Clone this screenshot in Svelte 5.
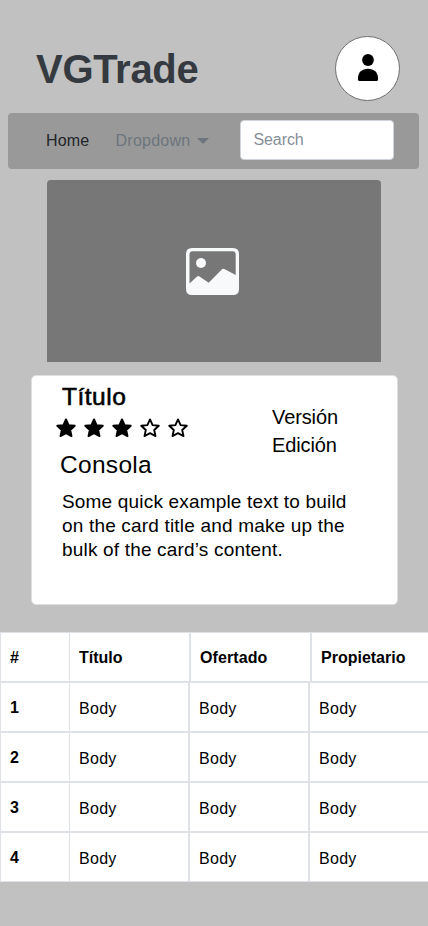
<script>
  const stars = [true, true, true, false, false];
  const headings = ['#', 'Título', 'Ofertado', 'Propietario'];
  const rows = [1, 2, 3, 4];
  const star = 'M10 1.4 12.6 7.1 18.8 7.8 14.2 12 15.5 18.1 10 15.1 4.5 18.1 5.8 12 1.2 7.8 7.4 7.1Z';
</script>

<div class="page">
  <header>
    <h1>VGTrade</h1>
    <div class="avatar">
      <svg width="20" height="27" viewBox="0 0 20 27"><circle cx="10" cy="6" r="5.9" /><path d="M0 25.5V24C0 18.5 4.2 14.8 10 14.8S20 18.5 20 24V25.5Q20 27 18.5 27H1.5Q0 27 0 25.5Z" /></svg>
    </div>
  </header>
  <nav>
    <span class="home">Home</span>
    <span class="drop">Dropdown</span>
    <svg class="caret" width="12" height="6" viewBox="0 0 12 6"><path d="M0 0H12L6 6Z" /></svg>
    <div class="search">Search</div>
  </nav>
  <div class="hero">
    <svg width="53" height="47" viewBox="0 0 53 47">
      <path fill-rule="evenodd" d="M6 0H47Q53 0 53 6V41Q53 47 47 47H6Q0 47 0 41V6Q0 0 6 0ZM3.5 35.5 11 28.5Q12.2 27.5 13.5 28.4L22.7 34.8 35.5 21.7Q37 20.3 38.8 21.2L49.7 27V6.5Q49.7 3.3 46.5 3.3H6.7Q3.5 3.3 3.5 6.5Z" />
      <circle cx="15" cy="15" r="5" />
    </svg>
  </div>
  <section class="card">
    <div class="top">
      <div class="left">
        <h2>Título</h2>
        <div class="stars">
          {#each stars as full}
            <svg class:full width="20" height="20" viewBox="0 0 20 20"><path d={star} /></svg>
          {/each}
        </div>
        <div class="console">Consola</div>
      </div>
      <div class="right"><div>Versión</div><div>Edición</div></div>
    </div>
    <p>Some quick example text to build<br />on the card title and make up the<br />bulk of the card’s content.</p>
  </section>
  <div class="table">
    <div class="row head">
      {#each headings as h}<div class="cell">{h}</div>{/each}
    </div>
    {#each rows as n}
      <div class="row">
        <div class="cell num">{n}</div>
        <div class="cell">Body</div>
        <div class="cell">Body</div>
        <div class="cell">Body</div>
      </div>
    {/each}
  </div>
</div>

<style>
  :global(body) { margin: 0; background: #c1c1c1; }
  .page { box-sizing: border-box; width: 428px; height: 926px; overflow: hidden; background: #c1c1c1; font-family: "Liberation Sans", Arial, sans-serif; font-size: 16px; color: #000; }
  .page * { box-sizing: border-box; }
  svg { display: block; }
  header { height: 113px; display: flex; justify-content: space-between; padding: 35px 28px 0 36px; }
  h1 { margin: 11px 0 0; font-size: 40px; line-height: 46px; color: #343a40; letter-spacing: -0.3px; }
  .avatar { width: 65px; height: 65px; margin-top: 0.5px; border: 1px solid #707070; border-radius: 50%; background: #fff; display: flex; align-items: center; justify-content: center; padding-bottom: 1px; }
  nav { width: 411px; height: 56px; margin-left: 8px; border-radius: 4px; background: #999; display: flex; align-items: center; padding: 0 25.5px 1px 38px; }
  .home { width: 69.5px; color: #212529; letter-spacing: 0.15px; }
  .drop { width: 81.5px; color: #6c757d; letter-spacing: 0.25px; }
  .caret { fill: #6c757d; }
  .search { width: 154px; height: 40px; margin-left: auto; margin-top: -1px; background: #fff; border: 1px solid #ced4da; border-radius: 4px; line-height: 38px; padding-left: 13px; color: #868e96; letter-spacing: -0.1px; }
  .hero { width: 334px; height: 182px; margin: 11px 0 0 47px; background: #777; border-radius: 4px 4px 0 0; display: flex; align-items: center; justify-content: center; padding-right: 3px; fill: #f8f9fa; }
  .card { width: 367px; height: 230px; margin: 13px 0 0 31px; background: #fff; border: 1px solid #dfdfdf; border-radius: 5px; }
  .top { display: flex; height: 114px; }
  .left { width: 240px; padding: 7px 0 0 28px; }
  h2 { margin: 0 0 0 2px; font-size: 24.5px; line-height: 28px; font-weight: 400; letter-spacing: 0.5px; -webkit-text-stroke: 0.6px #000; }
  .stars { display: flex; gap: 8.1px; margin: 6.5px 0 0 -4px; height: 20px; }
  .stars path { fill: none; stroke: #000; stroke-width: 1.9; stroke-linejoin: round; }
  .stars .full path { fill: #000; }
  .console { font-size: 24.5px; line-height: 28px; margin-top: 13.5px; letter-spacing: 0.3px; }
  .right { padding-top: 27px; font-size: 20px; line-height: 28px; letter-spacing: -0.1px; }
  p { margin: 0 0 0 30px; font-size: 19px; line-height: 24px; letter-spacing: 0.18px; white-space: nowrap; }
  .table { width: 429px; margin-top: 27px; }
  .row { display: flex; height: 50px; }
  .cell { width: 120px; flex: none; background: #fff; border: 1px solid #dee2e6; padding-left: 9px; line-height: 52px; letter-spacing: 0.3px; overflow: hidden; }
  .cell:first-child { width: 70px; }
  .cell:nth-child(2) { width: 119px; border-left: 0; }
  .num, .head .cell { font-weight: 700; line-height: 50px; letter-spacing: 0; }
  .head .cell:nth-child(2) { width: 120px; }
  .head .cell:nth-child(3) { width: 121px; letter-spacing: 0.1px; }
</style>
